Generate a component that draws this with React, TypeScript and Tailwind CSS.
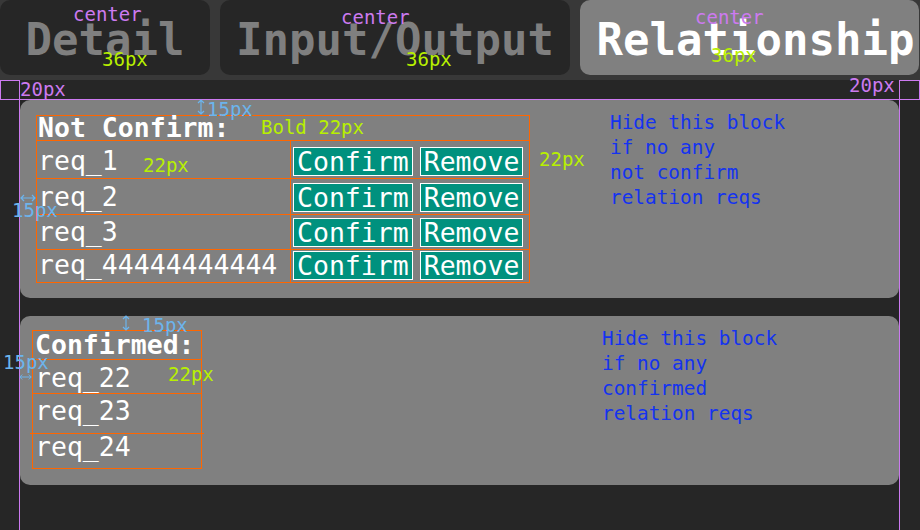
import React from "react"

const notConfirmed = [
    { name: "req_1", h: "h-[38px]" },
    { name: "req_2", h: "h-[36px]" },
    { name: "req_3", h: "h-[35px]" },
    { name: "req_44444444444", h: "h-[32px]" },
]

const Tab = ({ label, active, className }: { label: string; active?: boolean; className: string }) => (
    <div
        className={`flex justify-center h-[75px] rounded-[10px] pt-[15px] text-[44px] leading-[50px] font-bold ${active ? "bg-[#808080] text-white" : "bg-[#262626] text-[#7f7f7f]"} ${className}`}
    >
        {label}
    </div>
)

const Note = ({ lines, className }: { lines: string[]; className: string }) => (
    <div className={`text-[19.4px] leading-[25px] text-[#1433f0] ${className}`}>
        {lines.map((l) => (
            <div key={l}>{l}</div>
        ))}
    </div>
)

const Label = ({ text, className }: { text: string; className: string }) => (
    <span className={`absolute text-[19px] leading-[19px] whitespace-nowrap ${className}`}>{text}</span>
)

const VArrow = ({ className }: { className: string }) => (
    <svg className={`absolute ${className}`} width="8" height="16" viewBox="0 0 8 16" fill="none" stroke="#6cb4ec" strokeWidth="1.2">
        <path d="M4 1 L4 15 M1 4 L4 1 L7 4 M1 12 L4 15 L7 12" />
    </svg>
)

const HArrow = ({ className }: { className: string }) => (
    <svg className={`absolute ${className}`} width="16" height="8" viewBox="0 0 16 8" fill="none" stroke="#6cb4ec" strokeWidth="1.2">
        <path d="M1 4 L15 4 M4 1 L1 4 L4 7 M12 1 L15 4 L12 7" />
    </svg>
)

const ActionButton = ({ label }: { label: string }) => (
    <button className="border border-white bg-[#00917e] px-[3px] leading-[27px]">{label}</button>
)

export default function App() {
    return (
        <div className="relative w-[920px] h-[530px] overflow-hidden bg-[#262626] font-['DejaVu_Sans_Mono',monospace]">
            <div className="flex gap-[10px] h-[80px] bg-[#383838]">
                <Tab label="Detail" className="w-[210px]" />
                <Tab label="Input/Output" className="w-[350px]" />
                <Tab label="Relationship" active className="w-[339px] pl-[12px]" />
            </div>

            <div className="flex flex-col gap-[18px] pl-[20px] pt-[20px]">
                <div className="flex w-[879px] h-[198px] rounded-[10px] bg-[#808080] pl-[16px] pt-[15px]">
                    <div className="w-[494px] self-start border border-[#ff6600] text-[26.5px] text-white">
                        <div className="flex items-end h-[25px] border-b border-[#ff6600] pl-[1px] leading-[25px] font-bold">
                            Not Confirm:
                        </div>
                        {notConfirmed.map((r, i) => (
                            <div
                                key={r.name}
                                className={`grid grid-cols-[254px_1fr] ${r.h} ${i < notConfirmed.length - 1 ? "border-b border-[#ff6600]" : ""}`}
                            >
                                <div className="flex items-end border-r border-[#ff6600] pl-[1px] pb-[2px] leading-[30px]">{r.name}</div>
                                <div className="flex items-end gap-[7px] pl-[2px] pb-[2px]">
                                    <ActionButton label="Confirm" />
                                    <ActionButton label="Remove" />
                                </div>
                            </div>
                        ))}
                    </div>
                    <Note className="ml-[80px] -mt-[5px]" lines={["Hide this block", "if no any", "not confirm", "relation reqs"]} />
                </div>

                <div className="flex w-[879px] h-[169px] rounded-[10px] bg-[#808080] pl-[12px] pt-[14px]">
                    <div className="flex flex-col w-[170px] self-start border border-[#ff6600] text-[26.5px] text-white">
                        <div className="flex items-end h-[29px] border-b border-[#ff6600] pl-[2px] leading-[28px] font-bold">Confirmed:</div>
                        <div className="flex items-end h-[34px] border-b border-[#ff6600] pl-[2px] leading-[30px]">req_22</div>
                        <div className="flex items-end h-[39px] pl-[2px] pb-[7px] leading-[30px]">req_23</div>
                        <div className="-mx-[3px] h-[1px] bg-[#ff6600]" />
                        <div className="flex items-end h-[34px] pl-[2px] pb-[6px] leading-[30px]">req_24</div>
                    </div>
                    <Note className="ml-[400px] -mt-[4px]" lines={["Hide this block", "if no any", "confirmed", "relation reqs"]} />
                </div>
            </div>

            {/* spec annotations */}
            <div className="absolute left-0 right-0 top-[99px] h-[1px] bg-[#cc7af0]" />
            <div className="absolute left-[19px] top-[80px] bottom-0 w-[1px] bg-[#cc7af0]" />
            <div className="absolute left-[899px] top-[80px] bottom-0 w-[1px] bg-[#cc7af0]" />
            <div className="absolute left-0 top-[80px] w-[20px] h-[20px] border border-[#cc7af0]" />
            <div className="absolute left-[899px] top-[80px] w-[21px] h-[20px] border border-[#cc7af0]" />

            <Label text="center" className="left-[73px] top-[5px] text-[#cc7af0]" />
            <Label text="center" className="left-[341px] top-[8px] text-[#cc7af0]" />
            <Label text="center" className="left-[695px] top-[8px] text-[#cc7af0]" />
            <Label text="36px" className="left-[102px] top-[50px] text-[#b8f000]" />
            <Label text="36px" className="left-[406px] top-[50px] text-[#b8f000]" />
            <Label text="36px" className="left-[711px] top-[46px] text-[#b8f000]" />
            <Label text="20px" className="left-[20px] top-[80px] text-[#cc7af0]" />
            <Label text="20px" className="left-[849px] top-[76px] text-[#cc7af0]" />

            <VArrow className="left-[197px] top-[99px]" />
            <Label text="15px" className="left-[207px] top-[100px] text-[#6cb4ec]" />
            <HArrow className="left-[20px] top-[194px]" />
            <Label text="15px" className="left-[12px] top-[201px] text-[#6cb4ec]" />
            <Label text="Bold 22px" className="left-[261px] top-[118px] text-[#b8f000]" />
            <Label text="22px" className="left-[143px] top-[156px] text-[#b8f000]" />
            <Label text="22px" className="left-[539px] top-[150px] text-[#b8f000]" />

            <VArrow className="left-[122px] top-[315px]" />
            <Label text="15px" className="left-[142px] top-[316px] text-[#6cb4ec]" />
            <HArrow className="left-[19px] top-[373px] w-[13px]" />
            <Label text="15px" className="left-[3px] top-[353px] text-[#6cb4ec]" />
            <Label text="22px" className="left-[168px] top-[365px] text-[#b8f000]" />
        </div>
    )
}
